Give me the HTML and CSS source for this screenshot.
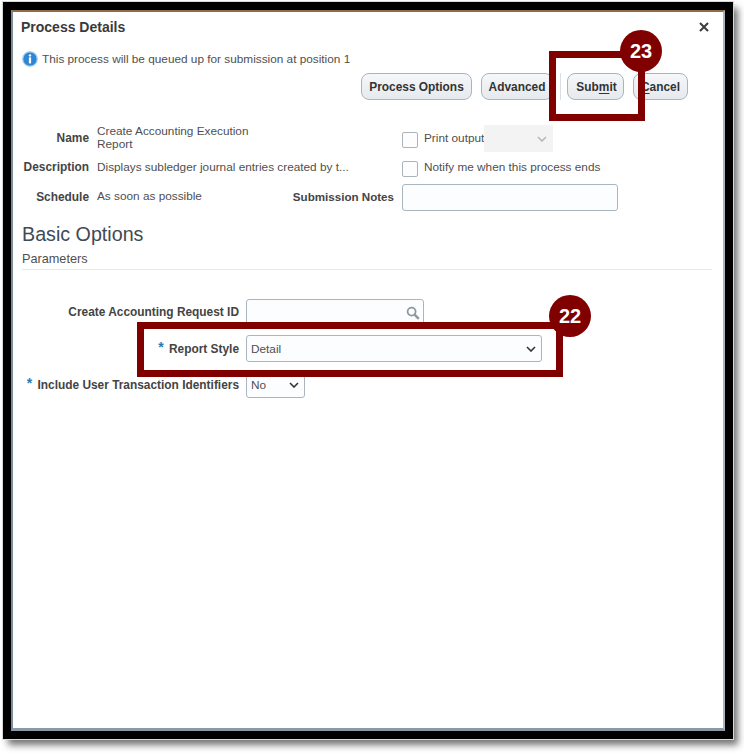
FILE: index.html
```html
<!DOCTYPE html>
<html lang="en">
<head>
<meta charset="utf-8">
<title>Process Details</title>
<link rel="stylesheet" href="styles.css">
</head>
<body>
<div class="page">
  <div class="frame">
    <main class="dialog">
      <header class="title-row">
        <h1 class="title">Process Details</h1>
        <svg class="close" viewBox="0 0 10 10" width="10" height="10" aria-label="Close"><path d="M1 1l8 8M9 1l-8 8"/></svg>
      </header>
      <div class="message">
        <svg class="info" viewBox="0 0 16 16" width="16" height="16" aria-hidden="true">
          <circle cx="8" cy="8" r="7.2" fill="#2f86d4" stroke="#9cc6ea" stroke-width="1.2"/>
          <circle cx="8" cy="4.4" r="1.2" fill="#fff"/>
          <rect x="6.9" y="6.4" width="2.2" height="6" fill="#fff"/>
        </svg>
        <span>This process will be queued up for submission at position 1</span>
      </div>
      <div class="toolbar">
        <button class="btn btn-options">Process Options</button>
        <button class="btn btn-advanced">Advanced</button>
        <span class="sep"></span>
        <button class="btn btn-submit">Sub<u>m</u>it</button>
        <button class="btn btn-cancel"><u>C</u>ancel</button>
      </div>
      <section class="details">
        <div class="label">Name</div>
        <div class="value name-value">Create Accounting Execution Report</div>
        <div class="empty"></div>
        <div class="check-row">
          <span class="checkbox"></span><span class="value print-label">Print output</span>
          <span class="disabled-select"><svg class="chev" viewBox="0 0 10 6" width="10" height="6"><path d="M1 1l4 4 4-4" stroke="#b4b8bc"/></svg></span>
        </div>
        <div class="label">Description</div>
        <div class="value">Displays subledger journal entries created by t...</div>
        <div class="empty"></div>
        <div class="check-row">
          <span class="checkbox"></span><span class="value">Notify me when this process ends</span>
        </div>
        <div class="label">Schedule</div>
        <div class="value">As soon as possible</div>
        <div class="label notes-label">Submission Notes</div>
        <div class="field notes"></div>
      </section>
      <h2 class="section-title">Basic Options</h2>
      <div class="subsection">Parameters</div>
      <section class="params">
        <div class="label">Create Accounting Request ID</div>
        <div class="field lookup">
          <svg viewBox="0 0 14 14" width="14" height="14" aria-hidden="true"><circle cx="5.6" cy="5.6" r="4" fill="none" stroke="#8f979d" stroke-width="1.8"/><path d="M8.6 8.6l4.2 4.2" stroke="#8f979d" stroke-width="2.4"/></svg>
        </div>
        <div class="label"><span class="req">*</span> Report Style</div>
        <div class="field select style-select"><span>Detail</span><svg class="chev" viewBox="0 0 10 6" width="10" height="6"><path d="M1 1l4 4 4-4" stroke="#333"/></svg></div>
        <div class="label"><span class="req">*</span> Include User Transaction Identifiers</div>
        <div class="field select no-select"><span>No</span><svg class="chev" viewBox="0 0 10 6" width="10" height="6"><path d="M1 1l4 4 4-4" stroke="#333"/></svg></div>
      </section>
    </main>
  </div>
  <div class="callout box-22"></div>
  <div class="badge badge-22">22</div>
  <div class="callout box-23"></div>
  <div class="badge badge-23">23</div>
</div>
</body>
</html>
```
FILE: styles.css
```css
* { box-sizing: border-box; }
html, body { margin: 0; padding: 0; background: #fff; }
body { font-family: "Liberation Sans", Arial, sans-serif; font-size: 11.8px; color: #4f4f4f; }
.page { position: relative; width: 744px; height: 753px; overflow: hidden; padding: 2px 0 0 3px; }
.frame {
  width: 730px; height: 737px; border: 8px solid #000;
  outline: 1px solid #d8d8d8;
  box-shadow: 5px 6px 7px rgba(0, 0, 0, .55);
}
.dialog {
  height: 100%; background: #fff;
  border-style: solid; border-width: 2px 2px 3px 2px;
  border-color: #8d6f45 #a9b4bd #8a99a5 #7d8d99;
  padding: 0 11px 0 8px;
}
.title-row { display: flex; justify-content: space-between; align-items: center; height: 16px; margin-top: 7px; padding-right: 6px; }
.title { margin: 0; font-size: 14px; font-weight: bold; color: #3a3a3a; line-height: 16px; }
.close { fill: none; stroke: #3c3c3c; stroke-width: 2; margin-right: -3px; }
.message { display: flex; align-items: center; gap: 4px; height: 16px; margin: 16px 0 0 1px; line-height: 14px; }
.toolbar { display: flex; align-items: center; justify-content: flex-end; height: 27px; margin: 6px 24px 0 0; }
.btn {
  height: 27px; padding: 0; border: 1px solid #a6b5c1; border-radius: 8px; white-space: nowrap;
  background: linear-gradient(#f5f7f9, #e6eaee);
  font: bold 11.9px "Liberation Sans", Arial, sans-serif; color: #333;
}
.btn u { text-underline-offset: 2px; }
.btn-options { width: 111px; }
.btn-advanced { width: 72px; margin-left: 9px; }
.sep { width: 1px; height: 27px; background: #d9dfe4; margin: 0 6px 0 7px; }
.btn-submit { width: 57px; padding-left: 2px; }
.btn-cancel { width: 55px; margin-left: 9px; }
.details {
  display: grid; grid-template-columns: 68px 187px 102px 1fr; column-gap: 8px;
  grid-template-rows: 27px 27px 27px; row-gap: 2.5px; align-items: center;
  margin-top: 25px;
}
.label { text-align: right; font-weight: bold; font-size: 11.9px; color: #444; white-space: nowrap; line-height: 14px; padding-bottom: 2px; }
.notes-label { font-size: 11.6px; }
.value { line-height: 13px; color: #4f4f4f; white-space: nowrap; padding-bottom: 2px; }
.value.print-label { padding-bottom: 0; }
.name-value { width: 160px; white-space: normal; }
.check-row { display: flex; align-items: center; }
.checkbox { width: 16px; height: 16px; border: 1px solid #a9b4bd; border-radius: 2px; background: #fdfdfe; margin: 2px 6px 0 0; flex: none; }
.disabled-select { width: 69px; height: 27px; background: #f3f3f4; display: flex; align-items: center; justify-content: flex-end; padding-right: 6px; flex: none; }
.chev { fill: none; stroke-width: 1.6; }
.field { height: 27px; border: 1px solid #a9b6c0; border-radius: 3px; background: #fcfdfe; }
.notes { width: 216px; }
.section-title { margin: 12px 0 0 1px; font-size: 19.7px; font-weight: normal; color: #3f4a55; line-height: 23px; }
.subsection { margin: 6px 0 0 1px; height: 18px; line-height: 15px; border-bottom: 1px solid #e4e9ee; font-size: 12.7px; color: #4f4f4f; }
.params {
  display: grid; grid-template-columns: 217px 1fr; column-gap: 7px; row-gap: 9px;
  grid-template-rows: 27px 27px 27px; align-items: center;
  margin: 29px 0 0 1px;
}
.req { color: #2a7ab8; font-size: 14px; vertical-align: 1px; margin-right: 2px; }
.lookup { width: 178px; display: flex; align-items: center; justify-content: flex-end; padding-right: 3px; }
.select { display: flex; align-items: center; justify-content: space-between; padding: 0 5px 0 4px; }
.select span { color: #4f4f4f; }
.style-select { width: 296px; }
.no-select { width: 59px; }
.callout { position: absolute; border: 7px solid #800000; }
.box-22 { left: 137px; top: 322px; width: 426px; height: 55px; }
.box-23 { left: 549px; top: 51px; width: 96px; height: 70px; }
.badge {
  position: absolute; width: 42px; height: 42px; border-radius: 50%; background: #800000;
  color: #fff; font-size: 20px; font-weight: bold; display: flex; align-items: center; justify-content: center;
}
.badge-22 { left: 549px; top: 295px; }
.badge-23 { left: 620px; top: 30px; }
```
